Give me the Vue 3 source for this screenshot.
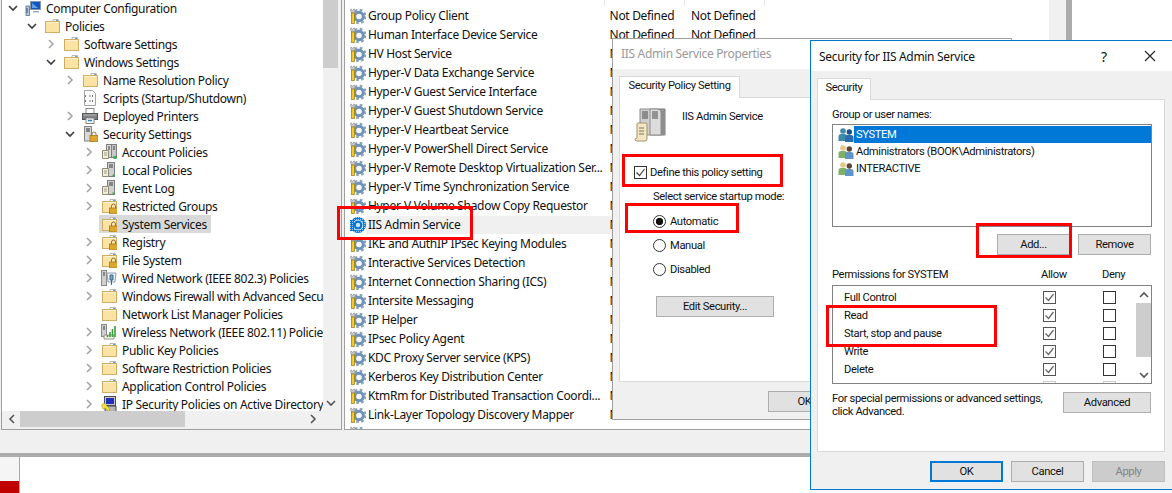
<script setup>
const tree = [
  { t: 'Computer Configuration', l: 0, c: 'down', i: 'computer' },
  { t: 'Policies', l: 1, c: 'down', i: 'folder' },
  { t: 'Software Settings', l: 2, c: 'right', i: 'folder' },
  { t: 'Windows Settings', l: 2, c: 'down', i: 'folder' },
  { t: 'Name Resolution Policy', l: 3, c: 'right', i: 'folder' },
  { t: 'Scripts (Startup/Shutdown)', l: 3, c: '', i: 'script' },
  { t: 'Deployed Printers', l: 3, c: 'right', i: 'printer' },
  { t: 'Security Settings', l: 3, c: 'down', i: 'secure' },
  { t: 'Account Policies', l: 4, c: 'right', i: 'servers' },
  { t: 'Local Policies', l: 4, c: 'right', i: 'serverdoc' },
  { t: 'Event Log', l: 4, c: 'right', i: 'serverdoc' },
  { t: 'Restricted Groups', l: 4, c: 'right', i: 'lockfolder' },
  { t: 'System Services', l: 4, c: '', i: 'lockfolder', sel: true },
  { t: 'Registry', l: 4, c: 'right', i: 'lockfolder' },
  { t: 'File System', l: 4, c: 'right', i: 'lockfolder' },
  { t: 'Wired Network (IEEE 802.3) Policies', l: 4, c: 'right', i: 'wired' },
  { t: 'Windows Firewall with Advanced Secu', l: 4, c: 'right', i: 'folder' },
  { t: 'Network List Manager Policies', l: 4, c: '', i: 'folder' },
  { t: 'Wireless Network (IEEE 802.11) Policies', l: 4, c: 'right', i: 'wireless' },
  { t: 'Public Key Policies', l: 4, c: 'right', i: 'folder' },
  { t: 'Software Restriction Policies', l: 4, c: 'right', i: 'folder' },
  { t: 'Application Control Policies', l: 4, c: 'right', i: 'folder' },
  { t: 'IP Security Policies on Active Directory', l: 4, c: 'right', i: 'ipsec' }
]
const services = [
  'Group Policy Client', 'Human Interface Device Service', 'HV Host Service',
  'Hyper-V Data Exchange Service', 'Hyper-V Guest Service Interface', 'Hyper-V Guest Shutdown Service',
  'Hyper-V Heartbeat Service', 'Hyper-V PowerShell Direct Service', 'Hyper-V Remote Desktop Virtualization Ser...',
  'Hyper-V Time Synchronization Service', 'Hyper-V Volume Shadow Copy Requestor', 'IIS Admin Service',
  'IKE and AuthIP IPsec Keying Modules', 'Interactive Services Detection', 'Internet Connection Sharing (ICS)',
  'Intersite Messaging', 'IP Helper', 'IPsec Policy Agent', 'KDC Proxy Server service (KPS)',
  'Kerberos Key Distribution Center', 'KtmRm for Distributed Transaction Coordi...', 'Link-Layer Topology Discovery Mapper',
  ''
]
const users = [
  { t: 'SYSTEM', i: 'usersys', sel: true },
  { t: 'Administrators (BOOK\\Administrators)', i: 'users' },
  { t: 'INTERACTIVE', i: 'users' }
]
const perms = ['Full Control', 'Read', 'Start, stop and pause', 'Write', 'Delete', '']
</script>

<template>
  <div class="screen">
    <svg class="defs" width="0" height="0" aria-hidden="true">
      <defs>
        <pattern id="dither" width="2" height="2" patternUnits="userSpaceOnUse">
          <rect width="2" height="2" fill="#0078d7" />
          <rect width="1" height="1" fill="#9cc8ef" />
        </pattern>
        <symbol id="folder" viewBox="0 0 16 16">
          <path d="M9 3.5V1.5h5.5v2" fill="#fff" stroke="#b8b8b8" />
          <rect x="1.5" y="3.5" width="14" height="11" fill="#fbe3a3" stroke="#cfae63" />
          <path d="M2.5 4.5h12" stroke="#fff4d2" />
          <path d="M12 2.5h2" stroke="#5d9fd6" />
        </symbol>
        <symbol id="lockfolder" viewBox="0 0 16 16">
          <use href="#folder" width="16" height="16" />
          <path d="M10.5 10V8a2 2 0 014 0v2" fill="none" stroke="#8d7640" />
          <rect x="8.5" y="10" width="8" height="6" fill="#dca62f" stroke="#a77a1e" stroke-width=".8" />
        </symbol>
        <symbol id="computer" viewBox="0 0 16 16">
          <rect x="5.5" y="1.5" width="10" height="8" fill="#1557c0" stroke="#8796a8" />
          <path d="M7 3l6 5H7z" fill="#5ea0ee" />
          <path d="M8 11h6v1.500H8z" fill="#9aa8b8" />
          <rect x="1" y="6" width="3.500" height="9.500" fill="#b9c6d4" stroke="#53708c" stroke-width=".8" />
          <path d="M2 8v5" stroke="#2a4f78" />
        </symbol>
        <symbol id="script" viewBox="0 0 16 16">
          <path d="M2.500.5h8l3 3v12h-11z" fill="#fafafa" stroke="#a6a6a6" />
          <path d="M4 5l-1 1 1 1M7 6h2M10 5l1 1-1 1M4 10l-1 1 1 1M7 11h2M10 10l1 1-1 1" fill="none" stroke="#5a5a5a" stroke-width=".8" />
        </symbol>
        <symbol id="printer" viewBox="0 0 16 16">
          <rect x="4" y=".5" width="8" height="5" fill="#fff" stroke="#888" />
          <rect x=".5" y="5.500" width="15" height="6" fill="#7e7e7e" stroke="#555" />
          <path d="M1.500 7h13" stroke="#bdbdbd" />
          <rect x="4" y="10" width="8" height="5.500" fill="#f4f4f4" stroke="#888" />
          <path d="M6 12.500h4" stroke="#2a7fc0" stroke-width="1.500" />
        </symbol>
        <symbol id="secure" viewBox="0 0 16 16">
          <rect x="2.500" y=".5" width="7" height="14.500" fill="#d8d8d8" stroke="#858585" />
          <path d="M4 3h4M4 5h4" stroke="#2f2f2f" />
          <path d="M10 9.500V8a2 2 0 014 0v1.500" fill="none" stroke="#8d7640" />
          <rect x="8" y="9.500" width="8" height="6" fill="#dca62f" stroke="#a77a1e" stroke-width=".8" />
        </symbol>
        <symbol id="servers" viewBox="0 0 16 16">
          <rect x="5.500" y=".5" width="5" height="13" fill="#d9d9d9" stroke="#7d7d7d" />
          <rect x="10.500" y=".5" width="5" height="13" fill="#c9c9c9" stroke="#7d7d7d" />
          <path d="M7 3h2M7 5h2M12 3h2M12 5h2" stroke="#3a3a3a" />
          <path d="M1.500 6.500h6v8h-6z" fill="#f5efd8" stroke="#8e8a78" />
          <path d="M3 9h3M3 11h3" stroke="#9d9a88" />
          <rect x="12.500" y="12" width="3" height="3" fill="#35b04a" />
        </symbol>
        <symbol id="serverdoc" viewBox="0 0 16 16">
          <rect x="6.500" y=".5" width="7" height="14" fill="#d0d0d0" stroke="#7d7d7d" />
          <path d="M8 3h4M8 5h4" stroke="#3a3a3a" />
          <path d="M1.500 6.500h6v8h-6z" fill="#f5efd8" stroke="#8e8a78" />
          <path d="M3 9h3M3 11h3" stroke="#9d9a88" />
          <rect x="11.500" y="12.500" width="2" height="2" fill="#35b04a" />
        </symbol>
        <symbol id="wired" viewBox="0 0 16 16">
          <rect x=".5" y=".5" width="5" height="15" fill="#d0d0d0" stroke="#8a8a8a" />
          <path d="M2 3h2M2 5h2" stroke="#3a3a3a" />
          <path d="M6 3h9l-1 9H7z" fill="#eef3f8" stroke="#8ea0b2" />
          <path d="M9 5h3v5H9zM10.500 10v5" fill="#7aa2c4" stroke="#3f6a8f" />
        </symbol>
        <symbol id="wireless" viewBox="0 0 16 16">
          <rect x=".5" y=".5" width="5" height="12" fill="#d0d0d0" stroke="#8a8a8a" />
          <path d="M2 3h2M2 5h2" stroke="#3a3a3a" />
          <path d="M3 11h10v4H3z" fill="#f0f0e4" stroke="#9a9a8a" />
          <path d="M6.500 13v-2M9 13V8M11.500 13V5M14 13V2" stroke="#3f9c3f" stroke-width="1.600" />
        </symbol>
        <symbol id="ipsec" viewBox="0 0 16 16">
          <rect x="3.500" y=".5" width="11" height="9" fill="#c9c9c9" stroke="#4d4d4d" />
          <rect x="5" y="2" width="8" height="6" fill="#1b2fb8" />
          <path d="M4 10h11v5.500H4z" fill="#b5b5b5" stroke="#4d4d4d" />
          <path d="M.5 9l2.500-2 3 3 3 4-1.500 1-3.500-3-2 1z" fill="#f6e23a" stroke="#a89a18" stroke-width=".6" />
        </symbol>
        <symbol id="gear" viewBox="0 0 16 16">
          <circle cx="9" cy="8.500" r="6.500" fill="none" stroke="#88a3c0" stroke-width="2.400" stroke-dasharray="2.600 2.500" />
          <circle cx="9" cy="8.500" r="4.300" fill="#f6f8fb" stroke="#6f92b7" stroke-width="3" />
          <path d="M1 .8l1.600 1.700L4.200.8 5.200 2.400 4.500 5H1.500L.6 2.500z" fill="#cbcbcb" stroke="#7f7f7f" stroke-width=".6" />
          <rect x="1.400" y="5" width="3.200" height="10.500" fill="#f4c92e" stroke="#94780f" stroke-width=".7" />
        </symbol>
        <symbol id="gearsel" viewBox="0 0 16 16">
          <circle cx="8" cy="8" r="6.600" fill="none" stroke="url(#dither)" stroke-width="2.800" />
          <circle cx="8" cy="8" r="4.500" fill="#0078d7" />
          <circle cx="8" cy="8" r="2.200" fill="#d5e8f8" />
          <rect x="0" y="3" width="4" height="11" fill="url(#dither)" />
        </symbol>
        <symbol id="usersys" viewBox="0 0 16 16">
          <circle cx="5" cy="4" r="2.800" fill="#3d8ba8" />
          <path d="M.5 14V9.500Q.5 7 3 7h4q2 0 2 2.500V14z" fill="#3d8ba8" />
          <circle cx="11.300" cy="5" r="2.700" fill="#1c4f86" />
          <path d="M7 15v-4.500Q7 8 9.500 8h3.500q2.500 0 2.500 2.500V15z" fill="#2a6cad" />
        </symbol>
        <symbol id="users" viewBox="0 0 16 16">
          <circle cx="5" cy="4" r="2.800" fill="#e5c88b" />
          <path d="M.5 14V9.500Q.5 7 3 7h4q2 0 2 2.500V14z" fill="#7fb068" />
          <circle cx="11.300" cy="5" r="2.700" fill="#5c4636" />
          <path d="M7 15v-4.500Q7 8 9.500 8h3.500q2.500 0 2.500 2.500V15z" fill="#5f94c8" />
        </symbol>
        <symbol id="bigserver" viewBox="0 0 32 34">
          <path d="M6 1h14v26H6z" fill="#cfcfcf" stroke="#8c8c8c" />
          <path d="M20 1h11v26H20z" fill="#9a9a9a" stroke="#7a7a7a" />
          <path d="M16 1h8l3 2v24H16z" fill="#dcdcdc" stroke="#8c8c8c" />
          <path d="M8 4h6M8 6h6M8 8h6M8 10h6M18 4h6M18 6h6M18 8h6M18 10h6" stroke="#4a4a4a" />
          <path d="M27 3h4v24h-4z" fill="#8d8d8d" />
          <path d="M1 31l2-1V16q0-1 1-1h8q1 0 1 1v15q0 2-2 2H3q-2 0-2-2z" fill="#f2e7c2" stroke="#a09570" />
          <path d="M5 20h5M5 23h5M5 26h5" stroke="#7c7660" />
        </symbol>
        <symbol id="checkgrey" viewBox="0 0 13 13">
          <path d="M2.500 6.500l3 3 5-6.500" fill="none" stroke="#666" stroke-width="1.300" />
        </symbol>
      </defs>
    </svg>

    <div class="mmc">
      <div class="panes">
        <div class="pane-left">
          <div class="tree-wrap">
            <div class="tree">
              <div v-for="n in tree" :key="n.t" class="tree-row" :style="{ paddingLeft: 5 + 19 * n.l + 'px' }">
                <span class="chev">
                  <svg v-if="n.c === 'down'" width="12" height="12" viewBox="0 0 12 12"><path d="M2 4l4 4 4-4" fill="none" stroke="#3c3c3c" stroke-width="1.600" /></svg>
                  <svg v-if="n.c === 'right'" width="12" height="12" viewBox="0 0 12 12"><path d="M4 2l4 4-4 4" fill="none" stroke="#a6a6a6" stroke-width="1.600" /></svg>
                </span>
                <span class="node" :class="{ 'node-sel': n.sel }">
                  <svg class="ic" width="16" height="16"><use :href="'#' + n.i" /></svg>
                  <span>{{ n.t }}</span>
                </span>
              </div>
            </div>
            <div class="vscroll">
              <div class="vthumb"></div>
              <svg class="varrow" width="10" height="8" viewBox="0 0 10 8"><path d="M1 2l4 4 4-4" fill="none" stroke="#555" stroke-width="1.600" /></svg>
            </div>
          </div>
          <div class="hscroll">
            <svg class="harrow" width="8" height="10" viewBox="0 0 8 10"><path d="M6 1L2 5l4 4" fill="none" stroke="#555" stroke-width="1.600" /></svg>
            <div class="hthumb"></div>
            <svg class="harrow harrow-end" width="8" height="10" viewBox="0 0 8 10"><path d="M2 1l4 4-4 4" fill="none" stroke="#555" stroke-width="1.600" /></svg>
          </div>
        </div>
        <div class="pane-right">
          <div class="list">
            <div class="list-head">
              <span class="hcol hcol-name"></span><span class="hcol"></span><span class="hcol"></span>
            </div>
            <div class="rows">
              <div v-for="s in services" :key="s" class="svc">
                <svg class="ic" width="16" height="16"><use :href="s === 'IIS Admin Service' ? '#gearsel' : '#gear'" /></svg>
                <div v-if="s" class="cells" :class="{ 'cells-sel': s === 'IIS Admin Service' }">
                  <span class="cell-name">{{ s }}</span>
                  <span class="cell-val cell-first">Not Defined</span>
                  <span class="cell-val">Not Defined</span>
                </div>
              </div>
            </div>
          </div>
          <div class="list-scroll"></div>
        </div>
      </div>
    </div>

    <div class="taskstub"><div class="stub-light"></div><div class="stub-red"></div></div>

    <section class="dlg-props">
      <header class="props-title">IIS Admin Service Properties</header>
      <div class="props-body dlg-text">
        <div class="tab props-tab">Security Policy Setting</div>
        <div class="props-panel">
          <div class="props-head">
            <svg width="32" height="34"><use href="#bigserver" /></svg>
            <span>IIS Admin Service</span>
          </div>
          <label class="define"><span class="check"><svg width="13" height="13" viewBox="0 0 13 13"><path d="M2.500 6.500l3 3 5-6.500" fill="none" stroke="#444" stroke-width="1.200" /></svg></span>Define this policy setting</label>
          <div class="startup">
            <div class="startup-label">Select service startup mode:</div>
            <div class="radio-row"><span class="radio radio-on"></span>Automatic</div>
            <div class="radio-row"><span class="radio"></span>Manual</div>
            <div class="radio-row"><span class="radio"></span>Disabled</div>
            <button class="btn edit-btn">Edit Security...</button>
          </div>
        </div>
        <div class="props-foot"><button class="btn">OK</button></div>
      </div>
    </section>

    <section class="dlg-sec">
      <header class="sec-title">
        <span class="sec-name">Security for IIS Admin Service</span>
        <span class="sec-help">?</span>
        <svg class="sec-x" width="12" height="12" viewBox="0 0 12 12"><path d="M1 1l10 10M11 1L1 11" stroke="#222" stroke-width="1.100" /></svg>
      </header>
      <div class="sec-body dlg-text">
        <div class="tab sec-tab">Security</div>
        <div class="sec-panel">
          <div class="lbl group-lbl">Group or user names:</div>
          <div class="users-box">
            <div v-for="u in users" :key="u.t" class="user-row">
              <svg class="ic" width="16" height="16"><use :href="'#' + u.i" /></svg>
              <span class="user-name" :class="{ 'user-sel': u.sel }">{{ u.t }}</span>
            </div>
          </div>
          <div class="btn-row">
            <button class="btn">Add...</button>
            <button class="btn">Remove</button>
          </div>
          <div class="perm-head">
            <span class="perm-title">Permissions for SYSTEM</span>
            <span class="perm-allow">Allow</span>
            <span class="perm-deny">Deny</span>
          </div>
          <div class="perm-box">
            <div class="perm-rows">
              <div v-for="(p, i) in perms" :key="i" class="perm-row">
                <span class="perm-name">{{ p }}</span>
                <span class="check check-allow" :class="{ 'check-fade': !p }"><svg v-if="p" width="13" height="13"><use href="#checkgrey" /></svg></span>
                <span class="check check-deny" :class="{ 'check-fade': !p }"></span>
              </div>
            </div>
            <div class="perm-scroll">
              <svg width="10" height="8" viewBox="0 0 10 8"><path d="M1 6l4-4 4 4" fill="none" stroke="#555" stroke-width="1.600" /></svg>
              <div class="perm-thumb"></div>
              <svg class="perm-down" width="10" height="8" viewBox="0 0 10 8"><path d="M1 2l4 4 4-4" fill="none" stroke="#555" stroke-width="1.600" /></svg>
            </div>
          </div>
          <div class="adv-row">
            <div class="adv-text">For special permissions or advanced settings,<br />click Advanced.</div>
            <button class="btn adv-btn">Advanced</button>
          </div>
        </div>
        <div class="sec-foot">
          <button class="btn btn-default">OK</button>
          <button class="btn">Cancel</button>
          <button class="btn btn-off">Apply</button>
        </div>
      </div>
    </section>

    <div class="mark mark-iis"></div>
    <div class="mark mark-define"></div>
    <div class="mark mark-auto"></div>
    <div class="mark mark-add"></div>
    <div class="mark mark-read"></div>
  </div>
</template>

<style scoped>
.screen { position: relative; width: 1172px; height: 493px; overflow: hidden; background: #fff; font-family: "Noto Sans", "Open Sans", sans-serif; font-size: 12px; color: #111; letter-spacing: -0.32px; }
.dlg-text { font-family: Roboto, "Noto Sans", sans-serif; font-size: 11.2px; letter-spacing: -0.37px; }
.defs { position: absolute; }
.ic { flex: none; display: block; }

.mmc { width: 1072px; height: 457px; box-sizing: border-box; background: #f0f0f0; border-right: 6px solid #ababab; border-bottom: 4px solid #ababab; }
.panes { display: flex; height: 430px; }
.pane-left { box-sizing: border-box; width: 341px; height: 431px; margin: -1px 0 0 1px; border: 1px solid #a0a0a0; display: flex; flex-direction: column; }
.tree-wrap { height: 411px; display: flex; overflow: hidden; }
.tree { width: 321px; height: 411px; overflow: hidden; background: #fff; }
.tree-row { height: 18px; display: flex; align-items: center; white-space: nowrap; position: relative; top: -1px; }
.chev { width: 12px; height: 12px; margin-right: 4px; flex: none; display: block; }
.chev svg { display: block; }
.node { display: flex; align-items: center; gap: 5px; height: 18px; padding: 0 4px 0 2px; }
.node-sel { background: #d9d9d9; }
.vscroll { width: 18px; flex: none; display: flex; flex-direction: column; justify-content: space-between; align-items: flex-start; }
.vthumb { width: 15px; height: 68px; background: #cdcdcd; }
.varrow { margin: 0 0 4px 3px; }
.hscroll { flex: 1; display: flex; align-items: flex-start; position: relative; width: 321px; height: 16px; background: #f0f0f0; }
.harrow { margin: 3px 0 0 6px; flex: none; }
.hthumb { width: 165px; height: 16px; background: #cdcdcd; margin-left: 4px; }
.harrow-end { margin-left: 124px; }
.pane-right { box-sizing: border-box; flex: 1; height: 431px; margin: -1px 0 0 2px; border-left: 1px solid #a0a0a0; border-bottom: 1px solid #a0a0a0; display: flex; }
.list { flex: 1; min-width: 0; background: #fff; overflow: hidden; }
.list-scroll { width: 17px; flex: none; background: #f0f0f0; }
.list-head { height: 7px; display: flex; }
.hcol { width: 80px; box-sizing: border-box; border-right: 1px solid #e5e5e5; height: 7px; flex: none; }
.hcol-name { width: 260px; }
.svc { height: 19px; display: flex; align-items: center; padding-left: 5px; white-space: nowrap; }
.cells { flex: 1; display: flex; align-items: center; height: 18px; padding-left: 2px; }
.cells-sel { background: #f0f0f0; }
.cell-name { width: 241.6px; flex: none; overflow: hidden; }
.cell-val { width: 80px; flex: none; }
.cell-first { width: 81.4px; }

.taskstub { position: absolute; left: 0; top: 457px; width: 20px; height: 36px; box-sizing: border-box; border-right: 1px solid #a8a8a8; }
.stub-light { height: 24px; background: #f5f5f5; }
.stub-red { height: 12px; background: #c00000; }

.tab { box-sizing: border-box; height: 22px; line-height: 18px; background: #fff; border: 1px solid #d9d9d9; border-bottom: 0; position: relative; z-index: 1; text-align: center; }
.btn { display: block; box-sizing: border-box; width: 73px; height: 21px; padding: 0; background: #e1e1e1; border: 1px solid #adadad; font: inherit; letter-spacing: inherit; color: #111; text-align: center; }

.dlg-props { position: absolute; left: 612px; top: 38px; width: 400px; height: 382px; box-sizing: border-box; border: 1px solid #a0a0a0; background: #f0f0f0; display: flex; flex-direction: column; }
.props-title { height: 30px; flex: none; line-height: 30px; padding-left: 8px; background: #fff; color: #999; }
.props-body { flex: 1; padding: 7px 6px 0; }
.props-tab { width: 121px; }
.props-panel { height: 285px; box-sizing: border-box; margin-top: -1px; background: #fff; border: 1px solid #d9d9d9; padding: 10px 0 0 14px; }
.props-head { display: flex; align-items: flex-start; gap: 16px; height: 34px; }
.props-head span { line-height: 17px; }
.define { display: flex; align-items: center; gap: 3px; margin-top: 23px; height: 14px; }
.check { display: block; box-sizing: border-box; width: 13px; height: 13px; flex: none; background: #fff; border: 1px solid #333; }
.check svg { display: block; margin: -1px; }
.startup { margin: 10px 0 0 19px; }
.startup-label { line-height: 16px; }
.radio-row { display: flex; align-items: center; gap: 4px; height: 24px; }
.startup-label + .radio-row { margin-top: 4px; }
.radio { box-sizing: border-box; width: 13px; height: 13px; border: 1px solid #333; border-radius: 50%; background: #fff; flex: none; position: relative; }
.radio-on { background: radial-gradient(circle, #111 0 3.4px, #fff 4px); }
.edit-btn { width: 118px; margin: 15px 0 0 3px; }
.props-foot { display: flex; padding: 9px 0 0 149px; }

.dlg-sec { position: absolute; left: 810px; top: 40px; width: 372px; height: 450px; box-sizing: border-box; border: 1px solid #0078d7; background: #f0f0f0; display: flex; flex-direction: column; }
.sec-title { height: 30px; flex: none; background: #fff; display: flex; align-items: center; padding-left: 8px; }
.sec-name { flex: none; width: 276px; }
.sec-help { width: 12px; font-size: 14px; margin-left: 6px; }
.sec-x { margin-left: 31px; }
.sec-body { flex: 1; padding: 7px 0 0 6px; }
.sec-tab { width: 54px; }
.sec-panel { box-sizing: border-box; width: 348px; height: 353px; margin-top: -1px; background: #fff; border: 1px solid #d9d9d9; padding: 6px 0 0 14px; }
.lbl { line-height: 17px; }
.group-lbl { height: 17px; }
.users-box { box-sizing: border-box; width: 320px; height: 103px; margin-top: 1px; border: 1px solid #828282; padding: 1px 0 0 5px; }
.user-row { display: flex; align-items: center; height: 17px; }
.user-name { flex: 1; height: 17px; line-height: 17px; padding-left: 2px; }
.user-sel { background: #0078d7; color: #fff; }
.btn-row { display: flex; gap: 8px; justify-content: flex-end; width: 319px; margin-top: 7px; }
.perm-head { display: flex; height: 16px; line-height: 16px; margin-top: 12px; width: 320px; }
.perm-title { width: 209px; flex: none; }
.perm-allow { width: 61px; flex: none; }
.perm-box { box-sizing: border-box; width: 320px; height: 99px; margin-top: 2px; border: 1px solid #828282; display: flex; }
.perm-rows { flex: 1; padding-top: 2px; overflow: hidden; }
.perm-row { display: flex; align-items: center; height: 18px; padding-left: 11px; }
.perm-name { width: 199px; flex: none; }
.check-allow { border-color: #555; }
.check-deny { margin-left: 47px; }
.check-fade { border-color: #ccc; }
.perm-scroll { width: 15px; flex: none; display: flex; flex-direction: column; align-items: center; padding-top: 5px; }
.perm-scroll svg { flex: none; }
.perm-thumb { width: 15px; height: 54px; flex: none; margin-top: 4px; background: #cdcdcd; }
.perm-down { margin-top: 14px; }
.adv-row { display: flex; justify-content: space-between; width: 319px; margin-top: 8px; }
.adv-text { line-height: 13px; white-space: nowrap; }
.adv-btn { width: 88px; flex: none; }
.sec-foot { display: flex; gap: 8px; padding: 9px 0 0 113px; }
.btn-default { border: 2px solid #0078d7; }
.btn-off { background: #ccc; border-color: #bfbfbf; color: #838383; }

.mark { position: absolute; box-sizing: border-box; border: 3px solid #f00; }
.mark-iis { left: 337px; top: 206px; width: 136px; height: 34px; }
.mark-define { left: 622px; top: 154px; width: 161px; height: 33px; }
.mark-auto { left: 625px; top: 203px; width: 114px; height: 30px; }
.mark-add { left: 976px; top: 223px; width: 96px; height: 35px; }
.mark-read { left: 826px; top: 305px; width: 171px; height: 42px; }
</style>
